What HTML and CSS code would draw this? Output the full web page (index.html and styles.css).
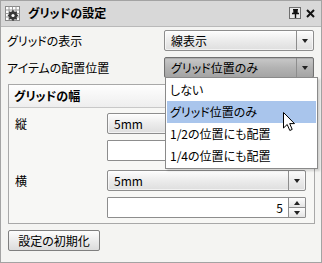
FILE: index.html
```html
<!DOCTYPE html>
<html lang="ja">
<head>
<meta charset="utf-8">
<link rel="stylesheet" href="styles.css">
</head>
<body>
<div class="window">
  <div class="titlebar">
    <svg class="ticon" width="15" height="15" viewBox="0 0 15 15">
      <rect x="0.5" y="0.5" width="14" height="14" fill="#fff" stroke="#8a8a8a"/>
      <path d="M4 0.5V14.5M7.5 0.5V14.5M11 0.5V14.5M0.5 4H14.5M0.5 7.5H14.5M0.5 11H14.5" stroke="#9a9a9a" stroke-width="1"/>
      <circle cx="8" cy="9.5" r="4.2" fill="#3a3a3a"/>
      <path d="M8 4.3V14.7M2.8 9.5H13.2M4.3 5.8L11.7 13.2M11.7 5.8L4.3 13.2" stroke="#3a3a3a" stroke-width="1.6"/>
      <circle cx="8" cy="9.5" r="1.6" fill="#fff"/>
    </svg>
    <span class="ttext">グリッドの設定</span>
    <span class="tbtn pin">
      <svg width="9" height="9" viewBox="0 0 9 9"><path d="M2 0.5H7M3 0.5V4M6 0.5V4M1 4.5H8M4.5 4.5V9" stroke="#111" stroke-width="1.4" fill="none"/><rect x="3" y="1" width="3" height="3.5" fill="#111"/></svg>
    </span>
    <span class="tclose">
      <svg width="9" height="9" viewBox="0 0 9 9"><path d="M1 1L8 8M8 1L1 8" stroke="#111" stroke-width="2"/></svg>
    </span>
  </div>
  <div class="content">
    <div class="row">
      <span class="label">グリッドの表示</span>
      <div class="combo wide"><span class="ctext">線表示</span><span class="carrow"><i class="tri"></i></span></div>
    </div>
    <div class="row">
      <span class="label">アイテムの配置位置</span>
      <div class="combo wide open"><span class="ctext">グリッド位置のみ</span><span class="carrow"><i class="tri"></i></span></div>
    </div>
    <div class="group">
      <div class="ghead">グリッドの幅</div>
      <div class="gbody">
        <div class="pair">
          <div class="grow">
            <span class="glabel">縦</span>
            <div class="combo"><span class="ctext">5mm</span><span class="carrow"><i class="tri"></i></span></div>
          </div>
          <div class="grow">
            <span class="glabel"></span>
            <div class="textbox"></div>
          </div>
        </div>
        <div class="pair">
          <div class="grow">
            <span class="glabel">横</span>
            <div class="combo"><span class="ctext">5mm</span><span class="carrow"><i class="tri"></i></span></div>
          </div>
          <div class="grow">
            <span class="glabel"></span>
            <div class="textbox num"><span class="nval">5</span><span class="spin"><span class="sup"><i class="tri up"></i></span><span class="sdn"><i class="tri"></i></span></span></div>
          </div>
        </div>
      </div>
    </div>
    <div class="btnrow"><span class="button">設定の初期化</span></div>
  </div>
  <ul class="dropdown">
    <li>しない</li>
    <li class="sel">グリッド位置のみ</li>
    <li>1/2の位置にも配置</li>
    <li>1/4の位置にも配置</li>
  </ul>
  <svg class="cursor" width="13" height="20" viewBox="0 0 13 20">
    <path d="M0.5 0.5V16L4.2 12.5L6.8 18.5L9.2 17.4L6.7 11.6H11.5Z" fill="#fff" stroke="#000" stroke-width="1" stroke-linejoin="miter"/>
  </svg>
</div>
</body>
</html>
```

FILE: styles.css
```css
* { box-sizing: border-box; }
html, body { margin: 0; padding: 0; }
body {
  font-family: "Noto Sans CJK JP", "Noto Sans", sans-serif;
  font-size: 12px;
  font-feature-settings: "palt";
  color: #000;
  background: #fff;
}
.window {
  position: relative;
  width: 322px;
  height: 263px;
  border: 1px solid #a3a3a3;
  background: #f4f4f2;
}
.titlebar {
  height: 26px;
  display: flex;
  align-items: center;
  padding: 0 6px 1px 4px;
  background: #d8d8d8;
  border-bottom: 1px solid #b9b9b9;
}
.ticon { flex: none; }
.ttext {
  margin-left: 8px;
  font-weight: bold;
  flex: 1;
  line-height: 14px;
}
.tbtn {
  width: 12px;
  height: 12px;
  border: 1px solid #6f6f6f;
  background: #e8e8e8;
  display: flex;
  align-items: center;
  justify-content: center;
}
.tclose {
  margin-left: 5px;
  display: flex;
  align-items: center;
}
.content {
  padding: 3px 6px 0 6px;
}
.row {
  display: flex;
  align-items: center;
  height: 21px;
  margin-bottom: 6px;
  margin-right: 1px;
}
.label {
  width: 157px;
  line-height: 14px;
  flex: none;
}
.combo {
  height: 21px;
  flex: 1;
  display: flex;
  border: 1px solid #8d8d8d;
  border-radius: 2px;
  background: linear-gradient(#fdfdfd, #ececec 50%, #dedede);
  box-shadow: inset 0 0 0 1px rgba(255,255,255,0.6);
}
.combo.open {
  background: linear-gradient(#c9c9c9, #b3b3b3 50%, #a4a4a4);
  border-color: #707070;
  box-shadow: inset 0 1px 1px rgba(0,0,0,0.15);
}
.ctext {
  flex: 1;
  padding-left: 6px;
  line-height: 19px;
}
.carrow {
  width: 17px;
  border-left: 1px solid #8d8d8d;
  display: flex;
  align-items: center;
  justify-content: center;
}
.tri {
  display: block;
  width: 0;
  height: 0;
  border-left: 3.5px solid transparent;
  border-right: 3.5px solid transparent;
  border-top: 4px solid #222;
}
.tri.up {
  border-top: 0;
  border-bottom: 4px solid #222;
}
.group {
  margin: 0 0 0 1px;
  width: 307px;
  border: 1px solid #a8a8a8;
  background: #f7f7f5;
}
.ghead {
  height: 23px;
  padding-left: 5px;
  font-weight: bold;
  line-height: 21px;
  background: linear-gradient(#fefefe, #eeeeee);
  border-bottom: 1px solid #c8c8c8;
}
.gbody {
  padding: 5px 8px 5px 6px;
  display: flex;
  flex-direction: column;
  gap: 9px;
}
.pair {
  display: flex;
  flex-direction: column;
  gap: 6px;
}
.grow {
  display: flex;
  align-items: center;
  height: 21px;
}
.glabel {
  width: 92px;
  flex: none;
  line-height: 14px;
}
.textbox {
  flex: 1;
  height: 21px;
  border: 1px solid #8d8d8d;
  border-radius: 1px;
  background: #fff;
  display: flex;
}
.nval {
  flex: 1;
  text-align: right;
  padding-right: 5px;
  line-height: 19px;
}
.spin {
  width: 17px;
  border-left: 1px solid #8d8d8d;
  display: flex;
  flex-direction: column;
}
.sup, .sdn {
  flex: 1;
  display: flex;
  align-items: center;
  justify-content: center;
  background: linear-gradient(#fdfdfd, #e4e4e4);
}
.sdn { border-top: 1px solid #8d8d8d; }
.btnrow {
  margin-top: 6px;
  padding-left: 1px;
}
.button {
  display: inline-block;
  width: 92px;
  height: 21px;
  line-height: 19px;
  text-align: center;
  border: 1px solid #7f7f7f;
  border-radius: 2px;
  background: linear-gradient(#fdfdfd, #ececec 50%, #dcdcdc);
}
.dropdown {
  position: absolute;
  left: 164px;
  top: 76px;
  width: 153px;
  margin: 0;
  padding: 1px;
  list-style: none;
  background: #fff;
  border: 1px solid #8a8a8a;
  box-shadow: 2px 2px 2px rgba(0,0,0,0.15);
}
.dropdown li {
  height: 22px;
  line-height: 22px;
  padding-left: 3px;
}
.dropdown li.sel {
  background: #a9c5ec;
}
.cursor {
  position: absolute;
  left: 282px;
  top: 111px;
}
```
